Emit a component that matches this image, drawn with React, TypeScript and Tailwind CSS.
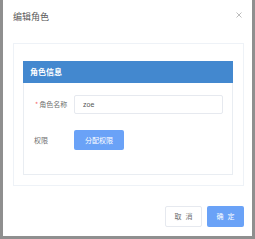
import React from "react";

const font = { fontFamily: '"Noto Sans CJK SC", "Noto Sans", sans-serif' };

export default function App() {
  return (
    <div className="w-[255px] h-[239px] bg-[#8f8f8f] pl-[3px] pr-[3px] pb-[3px]" style={font}>
      <div className="w-full h-full bg-white flex flex-col">
        {/* header */}
        <div className="h-[43px] flex justify-between items-start pl-[10px] pr-[10px]">
          <span className="mt-[12px] text-[9px] leading-[9px] text-[#5a5a5a]">编辑角色</span>
          <svg className="mt-[12px]" width="6" height="6" viewBox="0 0 6 6">
            <path d="M0.5 0.5 L5.5 5.5 M5.5 0.5 L0.5 5.5" stroke="#b5b5b5" strokeWidth="0.9" />
          </svg>
        </div>
        {/* card */}
        <div className="ml-[10px] mr-[8px] border border-[#eef2f7] pt-[17px] pl-[9px] pr-[10px] pb-[10px]">
          <div className="h-[22px] bg-[#4388cf] flex items-center pl-[7px]">
            <span className="text-[8px] leading-[8px] font-bold text-white">角色信息</span>
          </div>
          <div className="border border-t-0 border-[#e9edf2] pt-[12px] pb-[24px] pl-[11px] pr-[9px] flex flex-col gap-[16px]">
            <div className="flex items-center">
              <div className="w-[39px] flex items-center text-[7px] leading-[7px] text-[#707070]">
                <span className="text-[#f56c6c] mr-[1px]">*</span>
                <span>角色名称</span>
              </div>
              <div className="flex-1 h-[19px] border border-[#e6e9ef] rounded-[2px] flex items-center pl-[8px]">
                <span className="text-[7px] leading-[7px] text-[#555]" style={{ fontFamily: '"Liberation Sans", sans-serif' }}>zoe</span>
              </div>
            </div>
            <div className="flex items-center">
              <div className="w-[39px] -ml-[1px] text-[7px] leading-[7px] text-[#707070]">权限</div>
              <div className="w-[50px] h-[20px] ml-[1px] bg-[#6aa2f7] rounded-[2px] flex items-center justify-center">
                <span className="text-[7px] leading-[7px] text-white">分配权限</span>
              </div>
            </div>
          </div>
        </div>
        {/* footer */}
        <div className="flex justify-end gap-[5px] pr-[8px] mt-[20px]">
          <div className="w-[37px] h-[21px] border border-[#e6e9ef] rounded-[2px] flex items-center justify-center">
            <span className="text-[7px] leading-[7px] text-[#707070] tracking-[4px] pl-[4px]">取消</span>
          </div>
          <div className="w-[37px] h-[21px] bg-[#6aa2f7] rounded-[2px] flex items-center justify-center">
            <span className="text-[7px] leading-[7px] text-white tracking-[4px] pl-[4px]">确定</span>
          </div>
        </div>
      </div>
    </div>
  );
}
